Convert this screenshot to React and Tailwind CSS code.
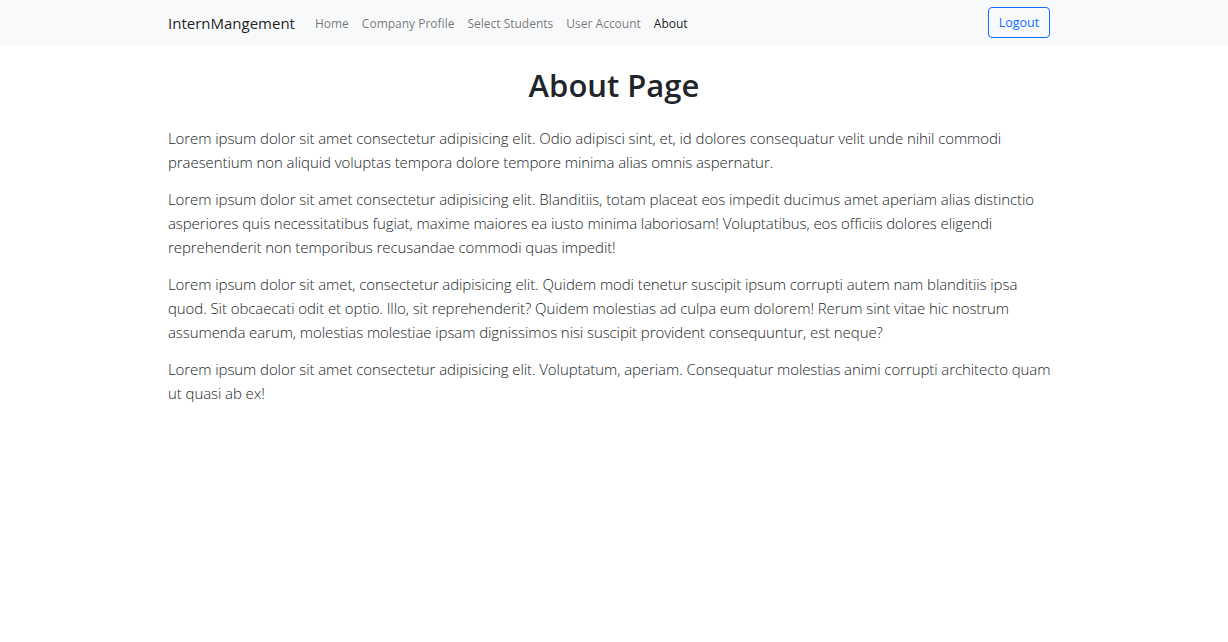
import React from 'react';

const links = ['Home', 'Company Profile', 'Select Students', 'User Account'];

const paragraphs = [
  'Lorem ipsum dolor sit amet consectetur adipisicing elit. Odio adipisci sint, et, id dolores consequatur velit unde nihil commodi praesentium non aliquid voluptas tempora dolore tempore minima alias omnis aspernatur.',
  'Lorem ipsum dolor sit amet consectetur adipisicing elit. Blanditiis, totam placeat eos impedit ducimus amet aperiam alias distinctio asperiores quis necessitatibus fugiat, maxime maiores ea iusto minima laboriosam! Voluptatibus, eos officiis dolores eligendi reprehenderit non temporibus recusandae commodi quas impedit!',
  'Lorem ipsum dolor sit amet, consectetur adipisicing elit. Quidem modi tenetur suscipit ipsum corrupti autem nam blanditiis ipsa quod. Sit obcaecati odit et optio. Illo, sit reprehenderit? Quidem molestias ad culpa eum dolorem! Rerum sint vitae hic nostrum assumenda earum, molestias molestiae ipsam dignissimos nisi suscipit provident consequuntur, est neque?',
  'Lorem ipsum dolor sit amet consectetur adipisicing elit. Voluptatum, aperiam. Consequatur molestias animi corrupti architecto quam ut quasi ab ex!',
];

const App = () => {
  return (
    <div className="min-h-[642px] bg-white text-[#212529]" style={{ fontFamily: '"Open Sans", sans-serif' }}>
      <nav className="h-[45px] bg-[#f8f9fa]">
        <div className="ml-[168px] w-[882px] h-full flex items-center">
          <span className="text-[15px] text-black/90 mr-[20px] pt-[1px]">InternMangement</span>
          <ul className="flex items-center gap-[13px] text-[12px] pt-[3px]">
            {links.map((l) => (
              <li key={l} className="text-black/55">{l}</li>
            ))}
            <li className="text-black/90">About</li>
          </ul>
          <button className="ml-auto h-[31px] w-[62px] border border-[#0d6efd] rounded-[4px] text-[#0d6efd] text-[12.5px] pt-[1px]">
            Logout
          </button>
        </div>
      </nav>

      <main className="ml-[168px] w-[884px]">
        <h1 className="text-center text-[31px] font-semibold leading-[38px] mt-[21px] mb-[22px] pl-[8px] text-[#212529]">
          About Page
        </h1>
        {paragraphs.map((p, i) => (
          <p key={i} className="text-[15px] font-light leading-[24px] tracking-[-0.08px] mb-[13px] text-[#212529]">
            {p}
          </p>
        ))}
      </main>
    </div>
  );
};

export default App;
